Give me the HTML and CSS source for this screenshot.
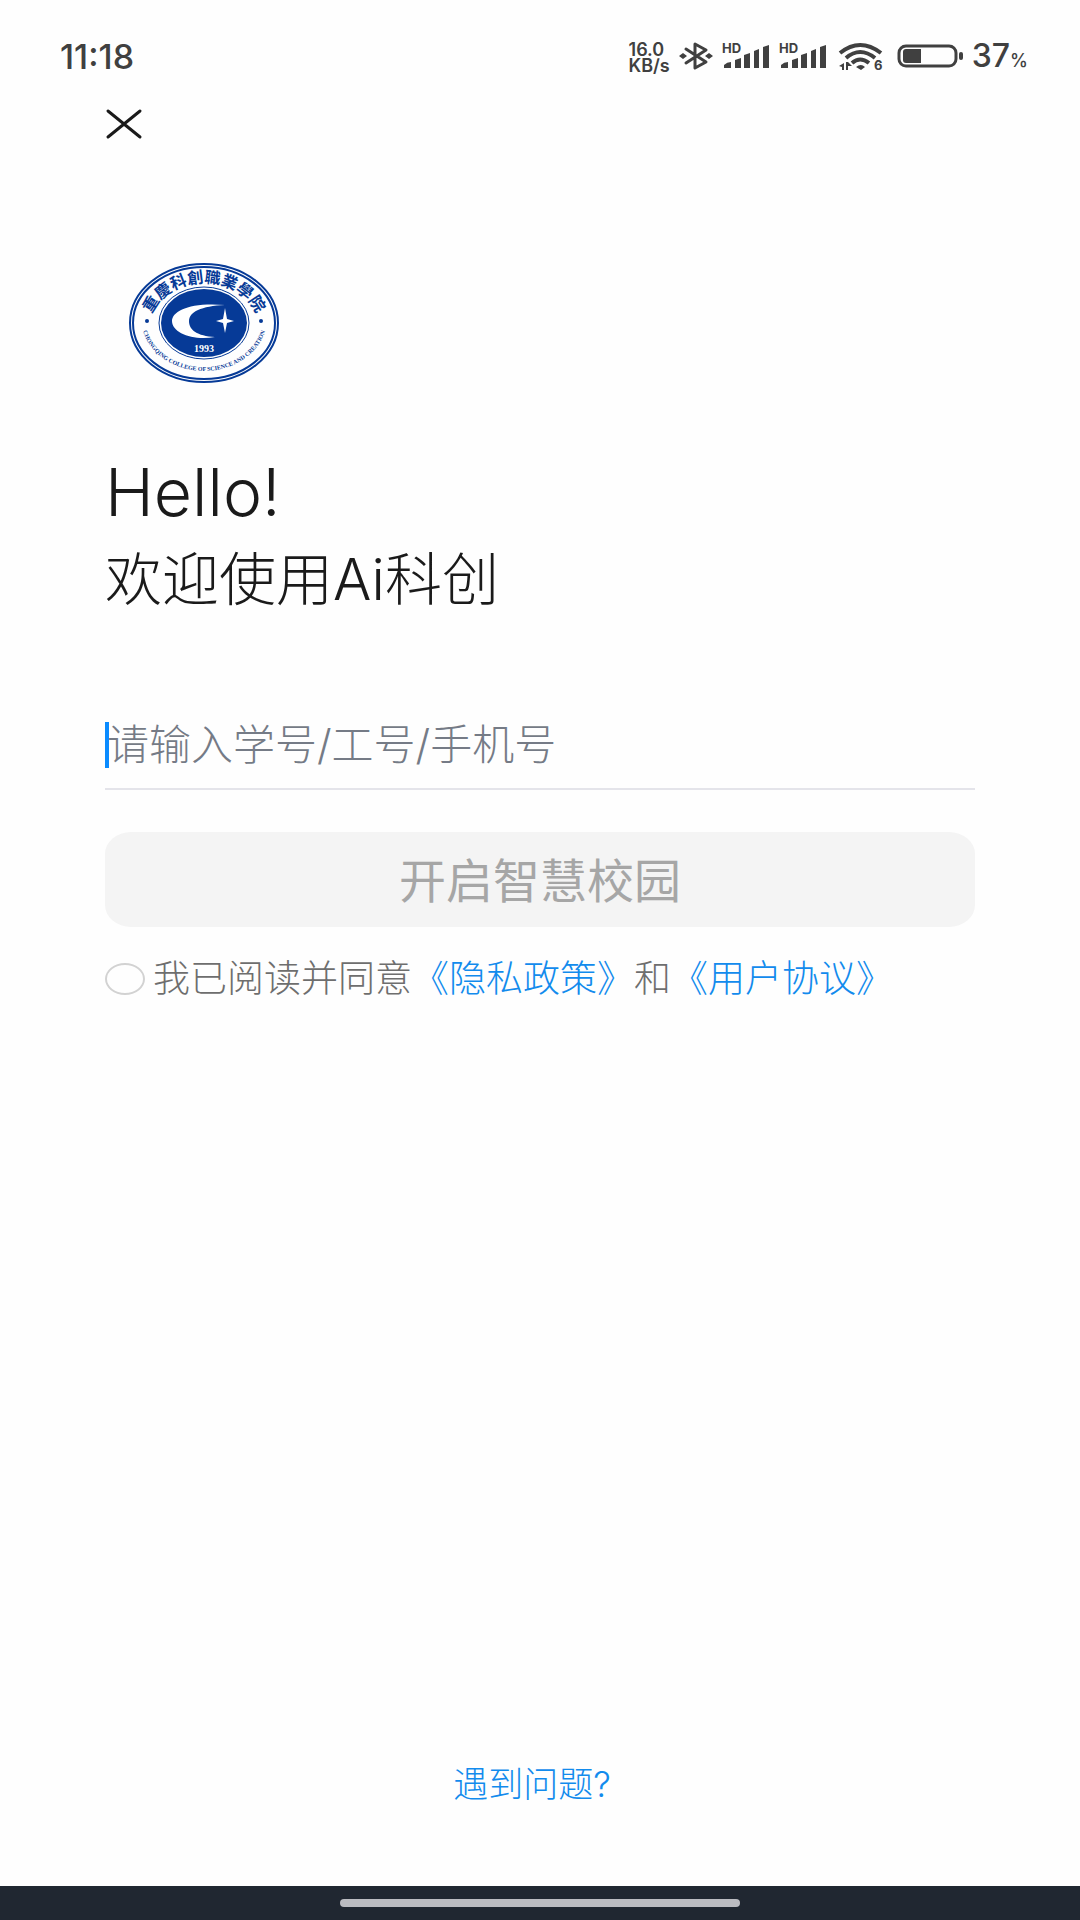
FILE: index.html
```html
<!DOCTYPE html>
<html lang="zh-CN">
<head>
<meta charset="utf-8">
<meta name="viewport" content="width=device-width, initial-scale=1">
<title>Ai科创</title>
<link rel="stylesheet" href="styles.css">
</head>
<body>
<header class="status">
  <time class="status-time">11:18</time>
  <div class="status-icons">
    <div class="speed"><span>16.0</span><span>KB/s</span></div>
    <svg class="icon" width="34" height="32" viewBox="0 0 34 32" aria-label="蓝牙">
      <path d="M7 9 27 22 16 28V4L27 10 7 23" fill="none" stroke="#404040" stroke-width="3" stroke-linejoin="round" stroke-linecap="round"/>
      <path d="M0 16l4-3 4 3-4 3zM26 16l4-3 4 3-4 3z" fill="#404040"/>
    </svg>
    <svg class="icon signal" width="48" height="32" viewBox="0 0 48 32" aria-label="信号">
      <text x="0" y="13" class="hd">HD</text>
      <path d="M2 28v-3q3-3 7-3v6zM13 28v-8l6-2v10zM22 28V15l6-2v15zM32 28V11l5-2v19zM41 28V7l6-2v23z" fill="#404040"/>
    </svg>
    <svg class="icon signal" width="48" height="32" viewBox="0 0 48 32" aria-label="信号">
      <text x="0" y="13" class="hd">HD</text>
      <path d="M2 28v-3q3-3 7-3v6zM13 28v-8l6-2v10zM22 28V15l6-2v15zM32 28V11l5-2v19zM41 28V7l6-2v23z" fill="#404040"/>
    </svg>
    <svg class="icon wifi" width="46" height="32" viewBox="0 0 46 32" aria-label="无线网络">
      <path d="M2 13Q22-3 43 13M8 18Q22 6 37 18M14 23Q22 16 31 23" fill="none" stroke="#404040" stroke-width="4"/>
      <path d="M18 27q5-4 9 0l-4 3zM1 26l5-3v7H4v-3zM8 22h2l4 4h-4v4H8z" fill="#404040"/>
      <text x="36" y="30" class="hd">6</text>
    </svg>
    <svg class="icon battery" width="66" height="32" viewBox="0 0 66 32" aria-label="电池">
      <rect x="2" y="6" width="57" height="20" rx="7" fill="none" stroke="#404040" stroke-width="3"/>
      <path d="M9 9h15v14H9q-3 0-3-3v-8q0-3 3-3z" fill="#404040"/>
      <rect x="62" y="12" width="4" height="8" rx="2" fill="#404040"/>
    </svg>
    <div class="level">37<small>%</small></div>
  </div>
</header>
<main class="page">
  <button class="close" type="button" aria-label="关闭">
    <svg width="38" height="32" viewBox="0 0 38 32"><path d="M3 3 35 29M35 3 3 29" stroke="#1a1a1a" stroke-width="3" stroke-linecap="round"/></svg>
  </button>
  <svg class="logo" width="152" height="122" viewBox="0 0 152 122" role="img" aria-label="重庆科创职业学院">
    <defs>
      <path id="arc-top" d="M21 67A55 46 0 0 1 131 67"/>
      <path id="arc-bottom" d="M13 56A63 53 0 0 0 139 56"/>
    </defs>
    <g fill="none" stroke="#063a97">
      <ellipse cx="76" cy="61" rx="74" ry="59" stroke-width="2"/>
      <ellipse cx="76" cy="61" rx="71" ry="56" stroke-width="2"/>
      <ellipse cx="76" cy="61" rx="45" ry="36" stroke-width="1"/>
    </g>
    <ellipse cx="76" cy="61" rx="43" ry="34" fill="#063a97"/>
    <path d="M97 43C62 40 44 49 44 59 44 71 65 79 87 75 69 74 61 68 61 59 61 50 73 44 97 43z" fill="#fff"/>
    <path d="M97 46 99 57 106 59 99 61 97 71 95 61 88 59 95 57z" fill="#fff"/>
    <text class="logo-year" x="76" y="90" text-anchor="middle">1993</text>
    <text class="logo-cn"><textPath href="#arc-top" startOffset="50%" text-anchor="middle">重慶科創職業學院</textPath></text>
    <text class="logo-en"><textPath href="#arc-bottom" startOffset="50%" text-anchor="middle">CHONGQING COLLEGE OF SCIENCE AND CREATION</textPath></text>
    <circle cx="19" cy="59" r="2" fill="#063a97"/><circle cx="133" cy="59" r="2" fill="#063a97"/>
  </svg>
  <h1 class="hello">Hello!</h1>
  <p class="welcome">欢迎使用Ai科创</p>
  <form class="login">
    <div class="field">
      <input class="account" type="text" placeholder="请输入学号/工号/手机号" aria-label="请输入学号/工号/手机号">
    </div>
    <button class="submit" type="submit" disabled>开启智慧校园</button>
    <div class="consent">
      <input class="agree" id="agree" type="checkbox">
      <div class="terms"><label for="agree">我已阅读并同意</label><a href="#privacy">《隐私政策》</a><span>和</span><a href="#terms">《用户协议》</a></div>
    </div>
  </form>
  <a class="help" href="#help">遇到问题?</a>
</main>
<footer class="nav"><div class="pill"></div></footer>
</body>
</html>
```
FILE: styles.css
```css
* { box-sizing: border-box; }

body {
  margin: 0;
  min-height: 100vh;
  display: flex;
  flex-direction: column;
  background: #fefefe;
  color: #1a1a1a;
  font-family: Inter, "Noto Sans CJK SC", sans-serif;
  font-weight: 300;
}

svg { display: block; }
a { color: #128bed; text-decoration: none; }
button, input { font: inherit; }

.status {
  height: 104px;
  padding: 8px 52px 0 60px;
  display: flex;
  align-items: center;
  justify-content: space-between;
  color: #404040;
}
.status-time { font-size: 34px; font-weight: 500; }
.status-icons { display: flex; align-items: center; gap: 9px; }
.icon { flex: none; }
.speed {
  display: flex;
  flex-direction: column;
  padding-top: 4px;
  font-size: 18px;
  line-height: 16px;
  font-weight: 600;
}
.hd { font-size: 13px; font-weight: 700; fill: #404040; }
.wifi { margin-left: 2px; }
.battery { margin-left: 4px; }
.level {
  padding-top: 4px;
  font-size: 32px;
  line-height: 32px;
  font-weight: 500;
}
.level small { font-size: 18px; }

.page {
  flex: 1;
  padding: 0 105px;
  display: flex;
  flex-direction: column;
  align-items: flex-start;
}
.close {
  height: 40px;
  padding: 0;
  border: 0;
  background: none;
}
.logo { margin: 118px 0 0 23px; }
.logo-year { font: 700 10px "Liberation Serif", serif; fill: #fff; }
.logo-cn { font: 700 16px "Noto Sans CJK TC", sans-serif; fill: #063a97; }
.logo-en { font: 700 6px "Liberation Serif", serif; fill: #063a97; }

.hello {
  margin: 68px 0 0;
  font-size: 66px;
  line-height: 80px;
  font-weight: 300;
}
.welcome {
  margin: 8px 0 0;
  font-size: 57px;
  line-height: 80px;
}

.login { width: 100%; margin-top: 80px; }
.field {
  position: relative;
  height: 90px;
  border-bottom: 2px solid #e4e4ea;
}
.field::before {
  content: "";
  position: absolute;
  left: 0;
  top: 22px;
  width: 4px;
  height: 46px;
  background: #0a8bff;
}
.account {
  width: 100%;
  height: 88px;
  padding: 0 0 0 2px;
  border: 0;
  outline: 0;
  background: none;
  font-size: 42px;
}
.account::placeholder { color: #757b86; opacity: 1; }
.submit {
  width: 100%;
  height: 95px;
  margin-top: 42px;
  padding: 0 0 4px;
  border: 0;
  border-radius: 26px / 22px;
  background: #f4f4f4;
  color: #a6a6a6;
  font-size: 47px;
  font-weight: 400;
}
.consent {
  margin-top: 24px;
  display: flex;
  align-items: center;
  gap: 8px;
}
.agree {
  appearance: none;
  flex: none;
  width: 40px;
  height: 32px;
  margin: 0;
  border: 2px solid #d2d2d2;
  border-radius: 50%;
}
.terms { font-size: 37px; line-height: 56px; color: #6e6e6e; }

.help {
  align-self: center;
  margin-top: auto;
  padding: 0 16px 77px 0;
  font-size: 35px;
  line-height: 50px;
}

.nav {
  height: 34px;
  display: flex;
  align-items: center;
  justify-content: center;
  background: #202731;
}
.pill {
  width: 400px;
  height: 8px;
  border-radius: 4px;
  background: #bbbcc1;
}
```
